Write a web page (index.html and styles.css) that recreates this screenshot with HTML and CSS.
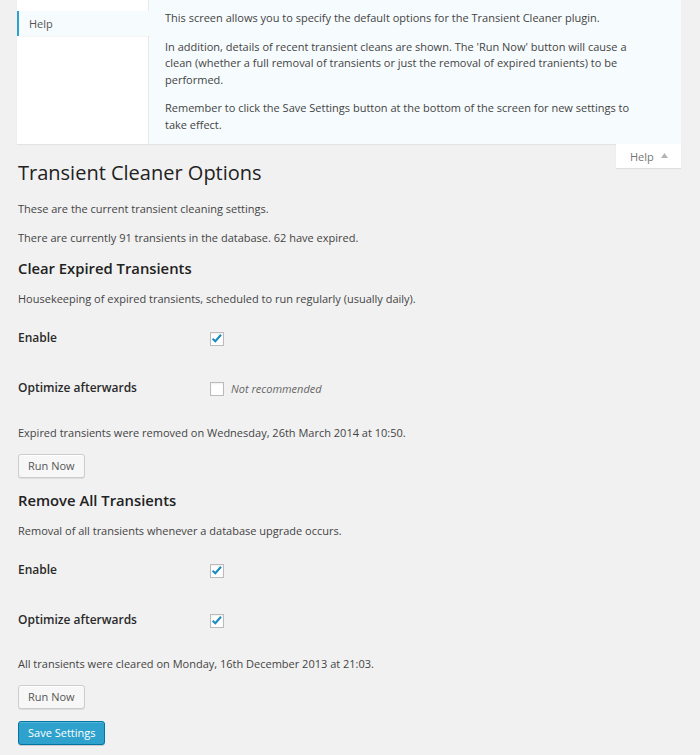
FILE: index.html
```html
<!DOCTYPE html>
<html lang="en">
<head>
<meta charset="utf-8">
<title>Transient Cleaner Options</title>
<link rel="stylesheet" href="styles.css">
</head>
<body>
<div class="screen-meta">
  <div class="help-tabs">
    <ul>
      <li class="tab tab-prev"></li>
      <li class="tab tab-active">Help</li>
    </ul>
  </div>
  <div class="help-content">
    <p>This screen allows you to specify the default options for the Transient Cleaner plugin.</p>
    <p>In addition, details of recent transient cleans are shown. The 'Run Now' button will cause a clean (whether a full removal of transients or just the removal of expired tranients) to be performed.</p>
    <p>Remember to click the Save Settings button at the bottom of the screen for new settings to take effect.</p>
  </div>
</div>

<div class="top-row">
  <h2 class="page-title">Transient Cleaner Options</h2>
  <button class="help-link" type="button">Help <svg class="arrow" width="7" height="5" viewBox="0 0 7 5"><polygon points="0,5 3.5,0 7,5" fill="#b4b4b4"/></svg></button>
</div>

<div class="wrap">
  <p class="first">These are the current transient cleaning settings.</p>
  <p>There are currently 91 transients in the database. 62 have expired.</p>

  <h3>Clear Expired Transients</h3>
  <p>Housekeeping of expired transients, scheduled to run regularly (usually daily).</p>
  <div class="form-table">
    <div class="row">
      <div class="label">Enable</div>
      <div class="field"><span class="checkbox checked"><svg width="12" height="12" viewBox="0 0 12 12"><path d="M1.6 5.8 L4.3 8.3 L10 1.8" fill="none" stroke="#1e8cbe" stroke-width="2.2"/></svg></span></div>
    </div>
    <div class="row">
      <div class="label">Optimize afterwards</div>
      <div class="field"><span class="checkbox"></span><span class="desc">Not recommended</span></div>
    </div>
  </div>
  <p class="date">Expired transients were removed on Wednesday, 26th March 2014 at 10:50.</p>
  <button class="button" type="button">Run Now</button>

  <h3>Remove All Transients</h3>
  <p>Removal of all transients whenever a database upgrade occurs.</p>
  <div class="form-table">
    <div class="row">
      <div class="label">Enable</div>
      <div class="field"><span class="checkbox checked"><svg width="12" height="12" viewBox="0 0 12 12"><path d="M1.6 5.8 L4.3 8.3 L10 1.8" fill="none" stroke="#1e8cbe" stroke-width="2.2"/></svg></span></div>
    </div>
    <div class="row">
      <div class="label">Optimize afterwards</div>
      <div class="field"><span class="checkbox checked"><svg width="12" height="12" viewBox="0 0 12 12"><path d="M1.6 5.8 L4.3 8.3 L10 1.8" fill="none" stroke="#1e8cbe" stroke-width="2.2"/></svg></span></div>
    </div>
  </div>
  <p class="date tight">All transients were cleared on Monday, 16th December 2013 at 21:03.</p>
  <button class="button" type="button">Run Now</button>
  <button class="button button-primary" type="button">Save Settings</button>
</div>
</body>
</html>
```

FILE: styles.css
```css
html, body {
  margin: 0;
  padding: 0;
}

body {
  background: #f1f1f1;
  color: #444;
  font-family: "Open Sans", "Noto Sans", "Liberation Sans", sans-serif;
  font-size: 11px;
  line-height: 16.5px;
  height: 755px;
  overflow: hidden;
}

p {
  margin: 0;
}

/* ---------- contextual help panel ---------- */
.screen-meta {
  display: flex;
  margin: 0 19px 0 17px;
  background: #fff;
  box-shadow: 0 1px 1px rgba(0, 0, 0, 0.05);
}

.help-tabs {
  width: 131px;
  flex: none;
  background: #fff;
  border-right: 1px solid #eaeaea;
}

.help-tabs ul {
  list-style: none;
  margin: 0;
  padding: 0;
}

.tab {
  display: block;
  box-sizing: border-box;
}

.tab-prev {
  height: 11px;
  box-shadow: 0 1px 0 rgba(0, 0, 0, 0.03);
}

.tab-active {
  height: 25px;
  line-height: 25px;
  padding-left: 10px;
  border-left: 2px solid #2ea2cc;
  background: #f6fbfd;
  color: #555;
  margin-right: -1px;
  box-shadow: 0 1px 0 rgba(0, 0, 0, 0.04);
}

.help-content {
  flex: 1;
  background: #f6fbfd;
  padding: 0 33px 11px 16px;
}

.help-content p {
  margin-top: 12px;
}

.help-content p:first-child {
  margin-top: 10px;
}

/* ---------- title row ---------- */
.top-row {
  display: flex;
  justify-content: space-between;
  align-items: flex-start;
  padding-left: 18px;
  margin-right: 19px;
}

.page-title {
  margin: 17px 0 0;
  font-size: 20px;
  line-height: 24px;
  font-weight: 400;
  color: #222;
}

.help-link {
  display: flex;
  align-items: center;
  gap: 7px;
  height: 24px;
  width: 65px;
  box-sizing: border-box;
  padding: 0 0 0 14px;
  border: 0;
  background: #fff;
  color: #777;
  font-family: inherit;
  font-size: 11px;
  box-shadow: 0 1px 1px rgba(0, 0, 0, 0.08);
}

.arrow {
  margin-top: -1px;
}

/* ---------- main settings ---------- */
.wrap {
  display: flex;
  flex-direction: column;
  align-items: flex-start;
  padding: 0 18px;
}

.wrap p {
  margin-top: 12px;
}

.wrap p.first {
  margin-top: 16px;
}

.wrap p.tight {
  margin-top: 11px;
}

.wrap h3 {
  margin: 13px 0 0;
  font-size: 14.8px;
  line-height: 19px;
  font-weight: 600;
  color: #222;
}

.wrap h3 + p {
  margin-top: 12.5px;
}

.form-table {
  margin-top: 6px;
  align-self: stretch;
}

.row {
  display: grid;
  grid-template-columns: 192px 1fr;
  align-items: center;
  height: 50px;
}

.label {
  font-size: 12px;
  font-weight: 600;
  color: #2a2a2a;
}

.field {
  display: flex;
  align-items: center;
  gap: 7px;
  padding-top: 2px;
}

.checkbox {
  display: flex;
  align-items: center;
  justify-content: center;
  width: 12px;
  height: 12px;
  border: 1px solid #bbb;
  background: #fff;
  box-shadow: inset 0 1px 2px rgba(0, 0, 0, 0.07);
}

.desc {
  font-style: italic;
  color: #666;
}

.button {
  margin-top: 12.5px;
  height: 24px;
  box-sizing: border-box;
  padding: 0 9px;
  border: 1px solid #ccc;
  border-radius: 3px;
  background: #f7f7f7;
  color: #555;
  font-family: inherit;
  font-size: 11px;
  line-height: 22px;
  box-shadow: inset 0 1px 0 #fff, 0 1px 0 rgba(0, 0, 0, 0.08);
}

.button-primary {
  margin-top: 12px;
  background: #2ea2cc;
  border-color: #0074a2;
  color: #fff;
  box-shadow: inset 0 1px 0 rgba(120, 200, 230, 0.5), 0 1px 0 rgba(0, 0, 0, 0.15);
}
```
